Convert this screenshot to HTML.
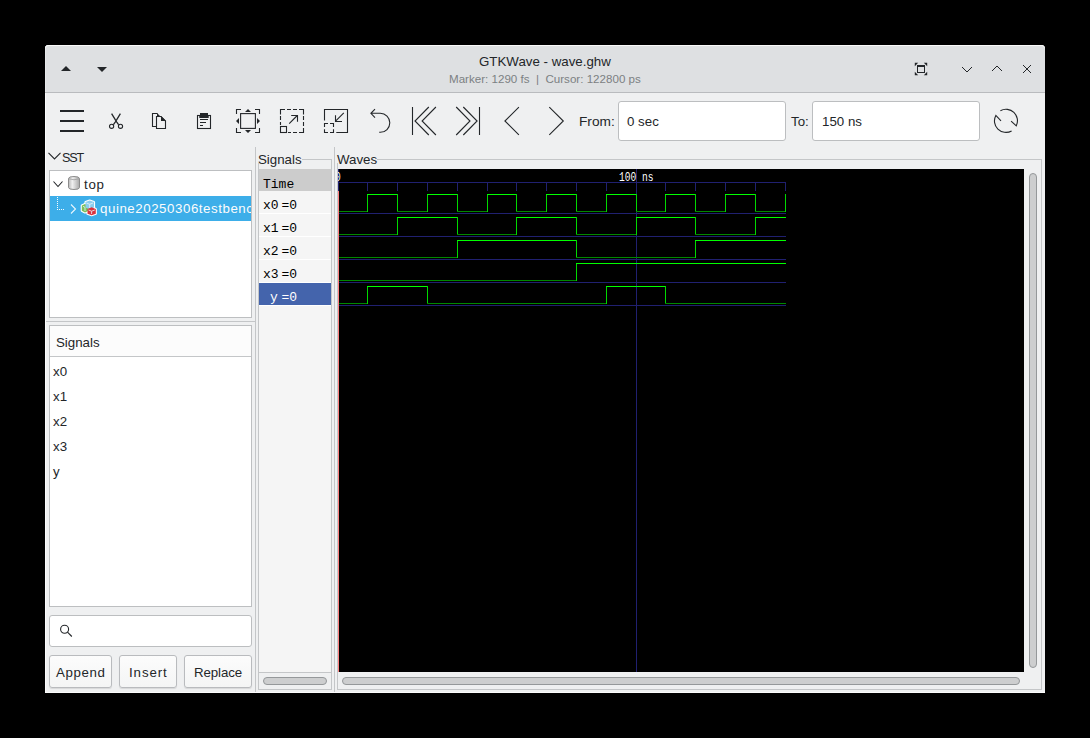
<!DOCTYPE html>
<html><head><meta charset="utf-8">
<style>
*{margin:0;padding:0;box-sizing:border-box}
html,body{width:1090px;height:738px;background:#000;overflow:hidden}
body{position:relative;font-family:"Liberation Sans",sans-serif;color:#232629}
.a{position:absolute}
.t{position:absolute;white-space:pre;line-height:1}
.mono{font-family:"Liberation Mono",monospace}
svg.i{position:absolute;overflow:visible}
.box{position:absolute;background:#fff;border:1px solid #bcbec0}
</style></head><body>
<!-- window -->
<div class="a" style="left:45px;top:45px;width:1000px;height:648px;background:#eff0f1;border-radius:4px 4px 0 0;box-shadow:inset 1px 0 0 #fbfbfc,inset 0 -1px 0 #fbfbfc"></div>
<!-- titlebar -->
<div class="a" style="left:45px;top:45px;width:1000px;height:48px;background:#dee0e2;border-radius:4px 4px 0 0;border-bottom:1px solid #b9bbbe;box-shadow:inset 0 1px 0 #fafafa,inset 1px 0 0 #e7e8ea"></div>
<div class="t" style="left:479px;top:55px;font-size:13.3px;color:#232629">GTKWave - wave.ghw</div>
<div class="t" style="left:449px;top:73px;font-size:11.6px;color:#7c8083">Marker: 1290 fs  |  Cursor: 122800 ps</div>
<!-- titlebar left triangles -->
<svg class="i" style="left:0;top:0" width="1090" height="100">
  <path d="M61 71 L66 66 L71 71 Z" fill="#232629"/>
  <path d="M97 67 L107 67 L102 72 Z" fill="#232629"/>
  <!-- fullscreen icon -->
  <rect x="917.5" y="65.5" width="7" height="7" fill="none" stroke="#232629" stroke-width="1"/>
  <rect x="917" y="65" width="8" height="2" fill="#232629"/>
  <path d="M914.8 62.8 H918.2 L914.8 66.2 Z M927.2 62.8 H923.8 L927.2 66.2 Z M914.8 75.2 H918.2 L914.8 71.8 Z M927.2 75.2 H923.8 L927.2 71.8 Z" fill="#232629"/>
  <g fill="none" stroke="#232629" stroke-width="1">
    <path d="M962 67 L967 72 L972 67"/>
    <path d="M992 71 L997 66 L1002 71"/>
    <path d="M1023 65 L1031 73 M1031 65 L1023 73"/>
  </g>
</svg>
<!-- toolbar icons -->
<svg class="i" style="left:0;top:0" width="1090" height="150">
  <g fill="#232629">
    <rect x="60" y="110" width="24" height="2"/>
    <rect x="60" y="120" width="24" height="2"/>
    <rect x="60" y="130" width="24" height="2"/>
  </g>
  <g fill="none" stroke="#232629" stroke-width="1.1">
    <!-- scissors -->
    <path d="M111.6 113.6 L116.6 121.8 Q117.8 123.3 118.6 124.8 M120.4 113.6 L115.4 121.8 Q114.2 123.3 113.4 124.8" stroke-width="1.3"/>
    <circle cx="111.6" cy="126.3" r="2.1"/>
    <circle cx="120.5" cy="126.3" r="2.1"/>
    <!-- copy -->
    <path d="M156 126.5 H152.5 V113.5 H157.5"/>
    <path d="M156.5 116.5 V128.5 H165.5 V121 L161 116.5 Z"/>
    <!-- paste -->
    <rect x="197.5" y="115.5" width="13" height="13"/>
    <!-- zoom fit -->
    <rect x="240.6" y="113.6" width="14.8" height="14.8"/>
    <path d="M236.5 114 V109.5 H241 M255 109.5 H259.5 V114 M259.5 128 V132.5 H255 M241 132.5 H236.5 V128"/>
    <!-- zoom in (dashed) -->
    <path d="M280.5 114.5 V109.5 H285 M287 109.5 H291 M293 109.5 H297 M299 109.5 H303.5 V114.5 M303.5 116 V120 M303.5 122 V126 M303.5 128 V132.5 H299 M297 132.5 H293 M291 132.5 H288 M280.5 116 V120 M280.5 122 V125"/>
    <rect x="280.5" y="126.5" width="6" height="6"/>
    <path d="M289.2 123.6 L297.3 115.5 M291.2 115.5 H297.5 V121.7"/>
    <!-- zoom out -->
    <path d="M324.5 120.6 V109.5 H347.5 V132.5 H336.3"/>
    <path d="M324.5 127 V123.5 H328 M330 123.5 H333.5 V127 M333.5 129.2 V132.5 H330 M328 132.5 H324.5 V129.2"/>
    <path d="M343.8 112.8 L335.8 120.8 M335.5 115.2 V121.5 H342"/>
    <!-- undo -->
    <path d="M375 109.2 L370.9 113.3 L375 117.6 M370.9 113.3 H380.3 A9.5 9.5 0 0 1 380.3 132.3 H379.2"/>
    <!-- begin / end -->
    <path d="M412.5 107 V135 M428.8 107 L415 121 L428.8 135 M435.9 107 L422.1 121 L435.9 135"/>
    <path d="M479.5 107 V135 M456.2 107 L470 121 L456.2 135 M463.3 107 L477.1 121 L463.3 135"/>
    <!-- prev / next -->
    <path d="M518.9 107.2 L504.9 121 L518.9 134.8"/>
    <path d="M549.3 107.2 L563.3 121 L549.3 134.8"/>
    <!-- refresh -->
    <path d="M1000.4 110.7 A11.5 11.5 0 0 1 1016.3 125.8 L1011.1 121.1 M1011.6 130.9 A11.5 11.5 0 0 1 995.85 115.4 L1001 120.8"/>
  </g>
  <g fill="#232629">
    <path d="M157 113 L161 117 H157 Z"/>
    <path d="M161 116 L166 121 H161 Z"/>
    <path d="M200 113 H208 V115 H208.7 V118 H199.3 V115 H200 Z"/>
    <rect x="200" y="119" width="8" height="1"/>
    <rect x="200" y="122" width="6" height="1"/>
    <rect x="200" y="125" width="3" height="1"/>
    <path d="M245 112 L248 109 L251 112 Z M245 130 L248 133 L251 130 Z M239 118 L236 121 L239 124 Z M257 118 L260 121 L257 124 Z"/>
  </g>
</svg>
<div class="t" style="left:579px;top:115px;font-size:13.7px">From:</div>
<div class="box" style="left:618px;top:101px;width:168px;height:40px;border-radius:3px"></div>
<div class="t" style="left:627px;top:115px;font-size:13.3px">0 sec</div>
<div class="t" style="left:791px;top:115px;font-size:13.3px">To:</div>
<div class="box" style="left:812px;top:101px;width:168px;height:40px;border-radius:3px"></div>
<div class="t" style="left:822px;top:115px;font-size:13.3px">150 ns</div>
<!-- left pane -->
<svg class="i" style="left:0;top:0" width="300" height="700">
  <path d="M48.5 152.8 L54.5 159 L60.5 152.8" fill="none" stroke="#232629" stroke-width="1.1"/>
</svg>
<div class="t" style="left:62px;top:152px;font-size:12.6px;letter-spacing:-1.1px">SST</div>
<div class="box" style="left:49px;top:170px;width:203px;height:148px;border-color:#bdbfc1"></div>
<div class="a" style="left:50px;top:196px;width:201px;height:25px;background:#3daee9"></div>
<svg class="i" style="left:0;top:0" width="300" height="700">
  <path d="M53.5 181.5 L58 186.5 L62.5 181.5" fill="none" stroke="#232629" stroke-width="1.1"/>
  <path d="M71 204.5 L75.5 209 L71 213.5" fill="none" stroke="#eaf6fd" stroke-width="1.1"/>
  <g fill="#fcfcfc"><rect x="57" y="197" width="1" height="1"/><rect x="57" y="199" width="1" height="1"/><rect x="57" y="201" width="1" height="1"/><rect x="57" y="203" width="1" height="1"/><rect x="57" y="205" width="1" height="1"/><rect x="57" y="207" width="1" height="1"/><rect x="57" y="209" width="1" height="1"/><rect x="59" y="209" width="1" height="1"/><rect x="61" y="209" width="1" height="1"/><rect x="63" y="209" width="1" height="1"/></g>
  <!-- db icon -->
  <defs>
    <linearGradient id="dbg" x1="0" x2="1" y1="0" y2="0"><stop offset="0" stop-color="#b8b8b8"/><stop offset="0.35" stop-color="#f0f0f0"/><stop offset="1" stop-color="#a8a8a8"/></linearGradient>
  </defs>
  <path d="M68.5 178.5 Q68.5 176.5 74 176.5 Q79.5 176.5 79.5 178.5 V187.5 Q79.5 189.5 74 189.5 Q68.5 189.5 68.5 187.5 Z" fill="url(#dbg)" stroke="#8c8c8c" stroke-width="1"/>
  <path d="M68.5 178.7 Q74 180.8 79.5 178.7" fill="none" stroke="#9a9a9a" stroke-width="0.8"/>
  <!-- module icon -->
  <g stroke="#ffffff" stroke-width="2.2" stroke-linejoin="round">
  <path d="M81.8 205.5 L85 204 L88.5 205.5 V210.8 L85 212.5 L81.8 210.8 Z" fill="#fff"/>
  <path d="M85.5 202 L89.7 200.6 L94 202 V207.5 L89.7 209.3 L85.5 207.5 Z" fill="#fff"/>
  <path d="M87.5 209 L91.6 207.3 L95.8 209 V213.8 L91.6 215.2 L87.5 213.8 Z" fill="#fff"/>
  </g>
  <path d="M81.8 205.5 L85 204 L88.5 205.5 V210.8 L85 212.5 L81.8 210.8 Z" fill="#7cc05a"/>
  <path d="M85.5 202 L89.7 200.6 L94 202 V207.5 L89.7 209.3 L85.5 207.5 Z" fill="#8ccdee"/>
  <path d="M87.5 209 L91.6 207.3 L95.8 209 V213.8 L91.6 215.2 L87.5 213.8 Z" fill="#d9333f"/>
  <g fill="none" stroke="#e8f4fb" stroke-width="0.8">
    <path d="M86.5 203 L89.7 204.3 L93 203 M89.7 204.3 V208"/>
    <path d="M88.5 210 L91.6 211.2 L94.8 210 M91.6 211.2 V214"/>
    <path d="M83 206.3 L85 207.3 M85 207.3 V211"/>
  </g>
</svg>
<div class="t" style="left:84px;top:178px;font-size:13.3px;letter-spacing:0.7px">top</div>
<div class="a" style="left:50px;top:196px;width:201px;height:25px;overflow:hidden"><div class="t" style="left:50px;top:6px;font-size:13.3px;letter-spacing:0.55px;color:#fcfcfc">quine20250306testbench</div></div>
<!-- paned sep -->
<div class="a" style="left:46px;top:321px;width:209px;height:1px;background:#c4c6c8"></div>
<!-- signals list -->
<div class="box" style="left:49px;top:325px;width:203px;height:282px;border-color:#bdbfc1"></div>
<div class="a" style="left:50px;top:326px;width:201px;height:31px;background:#fcfcfc;border-bottom:1px solid #c4c6c8"></div>
<div class="t" style="left:56px;top:336px;font-size:13.3px">Signals</div>
<div class="t" style="left:53px;top:365px;font-size:13.3px">x0</div>
<div class="t" style="left:53px;top:390px;font-size:13.3px">x1</div>
<div class="t" style="left:53px;top:415px;font-size:13.3px">x2</div>
<div class="t" style="left:53px;top:440px;font-size:13.3px">x3</div>
<div class="t" style="left:53px;top:465px;font-size:13.3px">y</div>
<!-- search -->
<div class="box" style="left:49px;top:615px;width:203px;height:32px;border-radius:3px"></div>
<svg class="i" style="left:0;top:0" width="300" height="700">
  <circle cx="64.6" cy="629.3" r="4.0" fill="none" stroke="#232629" stroke-width="1.1"/>
  <path d="M67.5 632.2 L71.8 636.5" stroke="#232629" stroke-width="1.1"/>
</svg>
<!-- buttons -->
<div class="a" style="left:49px;top:655px;width:63px;height:33px;border:1px solid #b9bbbe;border-radius:3px;background:linear-gradient(#fcfcfc,#f4f5f5);box-shadow:0 1px 1px rgba(0,0,0,0.1)"></div>
<div class="a" style="left:119px;top:655px;width:58px;height:33px;border:1px solid #b9bbbe;border-radius:3px;background:linear-gradient(#fcfcfc,#f4f5f5);box-shadow:0 1px 1px rgba(0,0,0,0.1)"></div>
<div class="a" style="left:184px;top:655px;width:68px;height:33px;border:1px solid #b9bbbe;border-radius:3px;background:linear-gradient(#fcfcfc,#f4f5f5);box-shadow:0 1px 1px rgba(0,0,0,0.1)"></div>
<div class="t" style="left:56px;top:666px;font-size:13.3px;letter-spacing:0.6px">Append</div>
<div class="t" style="left:129px;top:666px;font-size:13.3px;letter-spacing:0.9px">Insert</div>
<div class="t" style="left:194px;top:666px;font-size:13.3px;letter-spacing:-0.1px">Replace</div>
<!-- pane separators -->
<div class="a" style="left:255px;top:147px;width:1px;height:545px;background:#c4c6c8"></div>
<div class="a" style="left:334px;top:147px;width:1px;height:545px;background:#c4c6c8"></div>
<!-- signals frame -->
<div class="a" style="left:258px;top:159px;width:74px;height:531px;border:1px solid #c4c6c8"></div>
<div class="a" style="left:257px;top:150px;width:45px;height:13px;background:#eff0f1"></div>
<div class="t" style="left:258px;top:153px;font-size:13.3px">Signals</div>
<div class="a" style="left:259px;top:169px;width:72px;height:503px;background:#f5f5f5"></div>
<div class="a" style="left:259px;top:169px;width:72px;height:22px;background:#cccccc"></div>
<div class="a" style="left:259px;top:213px;width:72px;height:1px;background:#ffffff"></div>
<div class="a" style="left:259px;top:236px;width:72px;height:1px;background:#ffffff"></div>
<div class="a" style="left:259px;top:259px;width:72px;height:1px;background:#ffffff"></div>
<div class="a" style="left:259px;top:282px;width:72px;height:1px;background:#ffffff"></div>
<div class="a" style="left:259px;top:283px;width:72px;height:22px;background:#4464ac"></div>
<div class="a" style="left:259px;top:305px;width:72px;height:1px;background:#ffffff"></div>
<div class="t mono" style="left:263px;top:178px;font-size:13px;color:#000">Time</div>
<div class="t mono" style="left:263px;top:199px;font-size:13px;color:#000">x0</div><div class="t mono" style="left:281.5px;top:199px;font-size:13px;color:#000">=0</div>
<div class="t mono" style="left:263px;top:222px;font-size:13px;color:#000">x1</div><div class="t mono" style="left:281.5px;top:222px;font-size:13px;color:#000">=0</div>
<div class="t mono" style="left:263px;top:245px;font-size:13px;color:#000">x2</div><div class="t mono" style="left:281.5px;top:245px;font-size:13px;color:#000">=0</div>
<div class="t mono" style="left:263px;top:268px;font-size:13px;color:#000">x3</div><div class="t mono" style="left:281.5px;top:268px;font-size:13px;color:#000">=0</div>
<div class="t mono" style="left:270px;top:291px;font-size:13px;color:#fff">y</div><div class="t mono" style="left:281.5px;top:291px;font-size:13px;color:#fff">=0</div>
<div class="a" style="left:259px;top:672px;width:72px;height:1px;background:#c4c6c8"></div>
<div class="a" style="left:263px;top:677px;width:64px;height:8px;border-radius:4px;background:#cdcecf;border:1px solid #95989a"></div>
<!-- waves frame -->
<div class="a" style="left:337px;top:159px;width:705px;height:531px;border:1px solid #c4c6c8"></div>
<div class="a" style="left:336px;top:150px;width:41px;height:13px;background:#eff0f1"></div>
<div class="t" style="left:337px;top:153px;font-size:13.3px">Waves</div>
<div class="a" style="left:338px;top:169px;width:686px;height:503px;background:#000"></div>
<div class="a" style="left:338px;top:672px;width:703px;height:1px;background:#eff0f1"></div>
<div class="a" style="left:342px;top:677px;width:678px;height:8px;border-radius:4px;background:#cdcecf;border:1px solid #95989a"></div>
<div class="a" style="left:1029px;top:173px;width:8px;height:495px;border-radius:4px;background:#cdcecf;border:1px solid #95989a"></div>
<svg class="i" style="left:0;top:0" width="1090" height="738" shape-rendering="crispEdges">
<rect x="338" y="182" width="448" height="1" fill="#202070"/>
<rect x="367" y="183" width="1" height="8" fill="#202070"/>
<rect x="397" y="183" width="1" height="8" fill="#202070"/>
<rect x="427" y="183" width="1" height="8" fill="#202070"/>
<rect x="457" y="183" width="1" height="8" fill="#202070"/>
<rect x="487" y="183" width="1" height="8" fill="#202070"/>
<rect x="516" y="183" width="1" height="8" fill="#202070"/>
<rect x="546" y="183" width="1" height="8" fill="#202070"/>
<rect x="576" y="183" width="1" height="8" fill="#202070"/>
<rect x="606" y="183" width="1" height="8" fill="#202070"/>
<rect x="636" y="183" width="1" height="8" fill="#202070"/>
<rect x="665" y="183" width="1" height="8" fill="#202070"/>
<rect x="695" y="183" width="1" height="8" fill="#202070"/>
<rect x="725" y="183" width="1" height="8" fill="#202070"/>
<rect x="755" y="183" width="1" height="8" fill="#202070"/>
<rect x="785" y="183" width="1" height="8" fill="#202070"/>
<rect x="338" y="169" width="1" height="22" fill="#202070"/>
<rect x="636" y="169" width="1" height="503" fill="#202070"/>
<rect x="338" y="213" width="448" height="1" fill="#202070"/>
<rect x="338" y="236" width="448" height="1" fill="#202070"/>
<rect x="338" y="259" width="448" height="1" fill="#202070"/>
<rect x="338" y="282" width="448" height="1" fill="#202070"/>
<rect x="338" y="305" width="448" height="1" fill="#202070"/>
<rect x="338" y="211" width="30" height="1" fill="#008800"/>
<rect x="367" y="194" width="1" height="18" fill="#00d800"/>
<rect x="367" y="194" width="31" height="1" fill="#00ff00"/>
<rect x="397" y="194" width="1" height="18" fill="#00d800"/>
<rect x="397" y="211" width="31" height="1" fill="#008800"/>
<rect x="427" y="194" width="1" height="18" fill="#00d800"/>
<rect x="427" y="194" width="31" height="1" fill="#00ff00"/>
<rect x="457" y="194" width="1" height="18" fill="#00d800"/>
<rect x="457" y="211" width="31" height="1" fill="#008800"/>
<rect x="487" y="194" width="1" height="18" fill="#00d800"/>
<rect x="487" y="194" width="30" height="1" fill="#00ff00"/>
<rect x="516" y="194" width="1" height="18" fill="#00d800"/>
<rect x="516" y="211" width="31" height="1" fill="#008800"/>
<rect x="546" y="194" width="1" height="18" fill="#00d800"/>
<rect x="546" y="194" width="31" height="1" fill="#00ff00"/>
<rect x="576" y="194" width="1" height="18" fill="#00d800"/>
<rect x="576" y="211" width="31" height="1" fill="#008800"/>
<rect x="606" y="194" width="1" height="18" fill="#00d800"/>
<rect x="606" y="194" width="31" height="1" fill="#00ff00"/>
<rect x="636" y="194" width="1" height="18" fill="#00d800"/>
<rect x="636" y="211" width="30" height="1" fill="#008800"/>
<rect x="665" y="194" width="1" height="18" fill="#00d800"/>
<rect x="665" y="194" width="31" height="1" fill="#00ff00"/>
<rect x="695" y="194" width="1" height="18" fill="#00d800"/>
<rect x="695" y="211" width="31" height="1" fill="#008800"/>
<rect x="725" y="194" width="1" height="18" fill="#00d800"/>
<rect x="725" y="194" width="31" height="1" fill="#00ff00"/>
<rect x="755" y="194" width="1" height="18" fill="#00d800"/>
<rect x="755" y="211" width="31" height="1" fill="#008800"/>
<rect x="785" y="194" width="1" height="18" fill="#00d800"/>
<rect x="338" y="234" width="60" height="1" fill="#008800"/>
<rect x="397" y="217" width="1" height="18" fill="#00d800"/>
<rect x="397" y="217" width="61" height="1" fill="#00ff00"/>
<rect x="457" y="217" width="1" height="18" fill="#00d800"/>
<rect x="457" y="234" width="60" height="1" fill="#008800"/>
<rect x="516" y="217" width="1" height="18" fill="#00d800"/>
<rect x="516" y="217" width="61" height="1" fill="#00ff00"/>
<rect x="576" y="217" width="1" height="18" fill="#00d800"/>
<rect x="576" y="234" width="61" height="1" fill="#008800"/>
<rect x="636" y="217" width="1" height="18" fill="#00d800"/>
<rect x="636" y="217" width="60" height="1" fill="#00ff00"/>
<rect x="695" y="217" width="1" height="18" fill="#00d800"/>
<rect x="695" y="234" width="61" height="1" fill="#008800"/>
<rect x="755" y="217" width="1" height="18" fill="#00d800"/>
<rect x="755" y="217" width="31" height="1" fill="#00ff00"/>
<rect x="338" y="257" width="120" height="1" fill="#008800"/>
<rect x="457" y="240" width="1" height="18" fill="#00d800"/>
<rect x="457" y="240" width="120" height="1" fill="#00ff00"/>
<rect x="576" y="240" width="1" height="18" fill="#00d800"/>
<rect x="576" y="257" width="120" height="1" fill="#008800"/>
<rect x="695" y="240" width="1" height="18" fill="#00d800"/>
<rect x="695" y="240" width="91" height="1" fill="#00ff00"/>
<rect x="338" y="280" width="239" height="1" fill="#008800"/>
<rect x="576" y="263" width="1" height="18" fill="#00d800"/>
<rect x="576" y="263" width="210" height="1" fill="#00ff00"/>
<rect x="338" y="303" width="30" height="1" fill="#008800"/>
<rect x="367" y="286" width="1" height="18" fill="#00d800"/>
<rect x="367" y="286" width="61" height="1" fill="#00ff00"/>
<rect x="427" y="286" width="1" height="18" fill="#00d800"/>
<rect x="427" y="303" width="180" height="1" fill="#008800"/>
<rect x="606" y="286" width="1" height="18" fill="#00d800"/>
<rect x="606" y="286" width="60" height="1" fill="#00ff00"/>
<rect x="665" y="286" width="1" height="18" fill="#00d800"/>
<rect x="665" y="303" width="121" height="1" fill="#008800"/>
<rect x="338" y="191" width="1" height="481" fill="#ff8080"/>
</svg><div class="a" style="left:338px;top:169px;width:686px;height:13px;overflow:hidden">
  <div class="t mono" style="left:-3px;top:3px;font-size:12px;color:#fff;transform:scaleX(0.8);transform-origin:0 0">0</div>
  <div class="t mono" style="left:281px;top:3px;font-size:12px;color:#fff;transform:scaleX(0.8);transform-origin:0 0">100 ns</div>
</div>
</body></html>
